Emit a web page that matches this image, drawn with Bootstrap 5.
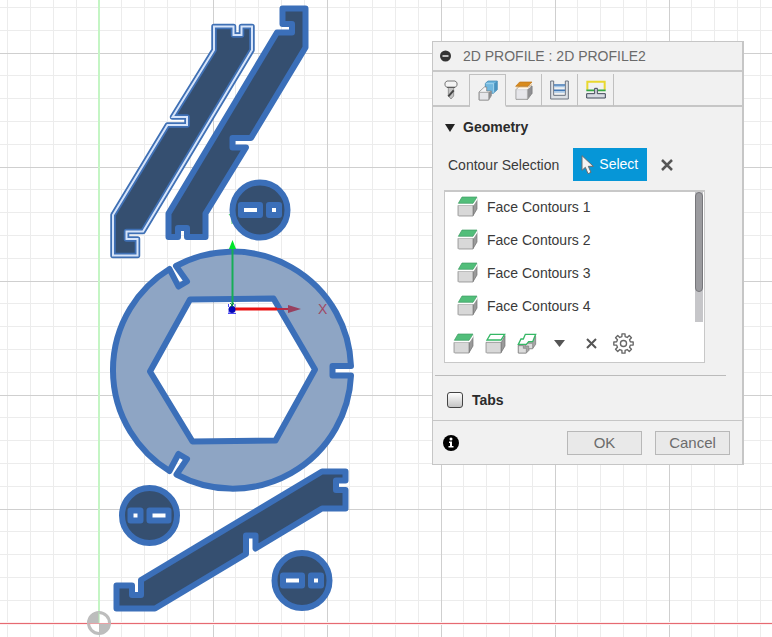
<!DOCTYPE html>
<html lang="en">
<head>
<meta charset="utf-8">
<meta name="viewport" content="width=device-width, initial-scale=1">
<title>2D Profile</title>
<link href="https://cdn.jsdelivr.net/npm/bootstrap@5.3.0/dist/css/bootstrap.min.css" rel="stylesheet">
<style>
body { font-family: "Liberation Sans", Arial, sans-serif; font-size: 14px; line-height: 20px; color: #3a3a3a; background: #fff; }
svg { display: block; flex: none; }
.workspace { min-height: 100vh; }
.sketch { inset: 0; }
.dialog-panel { top: 41px; right: 28px; width: 312px; background: #f1f1f1; border: 1px solid #c6c6c6; border-right-width: 2px; }
.panel-title { height: 30px; font-size: 14px; color: #6a6a6a; border-bottom: 2px solid #c8c8c8; padding: 0 7px; gap: 12px; }
.plain-btn { border: 0; background: none; padding: 0; color: #555; }
.tab-strip { height: 35px; padding-top: 2px; }
.tab-strip button { width: 36px; border: 0; border-right: 1px solid #c0c0c0; border-bottom: 2px solid #c6c6c6; background: none; padding: 0; }
.tab-strip button:first-child { width: 37px; }
.tab-strip button.active { border-top: 1px solid #c0c0c0; border-bottom-color: #f1f1f1; }
.tab-rest { border-bottom: 2px solid #c6c6c6; }
.section-head { height: 41px; padding-left: 12px; gap: 8px; font-size: 14px; font-weight: 700; color: #2b2b2b; }
.select-row { padding-left: 15px; gap: 14px; }
.select-btn { height: 33px; width: 74px; gap: 4px; padding: 0 8px; border: 0; border-radius: 0; font-size: 14px; color: #fff; background: #0696d7; }
.select-btn:hover { background: #0696d7; color: #fff; }
.contour-box { margin: 9px 37px 12px 11px; border: 1px solid #c8c8c8; border-top-width: 2px; background: #fff; }
.contour-list li { height: 29px; margin-bottom: 4px; padding-left: 12px; gap: 9px; }
.contour-list { height: 130px; overflow: hidden; }
.scroll-track { width: 8px; background: #c6c6c9; margin-right: 1px; }
.scroll-thumb { height: 100px; border: 1px solid #77777b; background: #9b9b9f; border-radius: 4px; }
.box-tools { height: 40px; padding: 2px 0 0 7px; gap: 10px; }
.box-tools button { width: 22px; display: flex; justify-content: center; }
.rule-line { margin: 0 16px 0 2px; border-top: 1px solid #bbb; }
.tabs-row { height: 44px; padding: 4px 0 0 14px; gap: 9px; }
.tabs-row label { font-size: 14px; color: #2b2b2b; }
.tick { appearance: none; width: 16px; height: 16px; margin: 0; border: 1px solid #444; border-radius: 3px; background: linear-gradient(#fff, #c4c4c4); }
.panel-foot { height: 44px; border-top: 1px solid #c6c6c6; padding: 0 12px 0 10px; gap: 13px; }
.foot-btn { width: 75px; height: 24px; border: 1px solid #b8b8b8; border-radius: 0; background: #e9e9e9; color: #6c6c6c; font-size: 15px; line-height: 20px; padding: 0; }
.cut { fill: #354f70; stroke: #3b6fb9; stroke-width: 6; stroke-linejoin: round; }
.cut-hole { fill: #fff; }
.axis-name { font: 14px "Liberation Sans", Arial, sans-serif; fill: #a04a66; }
</style>
<script src="https://cdn.jsdelivr.net/npm/bootstrap@5.3.0/dist/js/bootstrap.bundle.min.js"></script>
</head>
<body>
<svg width="0" height="0" class="position-absolute" aria-hidden="true">
  <defs>
    <symbol id="box-body" viewBox="0 0 63 63">
      <path d="M49 28 60 8V39L48 59z" fill="#9a9a9a" stroke="#6d6d6d" stroke-width="2"/>
      <path d="M3 28H48V60H5l-2-2z" fill="#d8d8d8" stroke="#777" stroke-width="2"/>
    </symbol>
    <symbol id="face-box" viewBox="0 0 63 63">
      <use href="#box-body"/>
      <path d="M3 26H49L61 7" fill="none" stroke="#fff" stroke-width="4"/>
      <path d="M15 3h45L48 22H4z" fill="#52be7a" stroke="#3c9a60" stroke-width="2"/>
    </symbol>
  </defs>
</svg>
<main class="workspace position-relative overflow-hidden">
  <svg class="sketch position-absolute w-100 h-100" role="img" aria-label="Sketch of the profile parts">
    <defs>
      <pattern id="grid" x="99" y="53" width="114" height="114" patternUnits="userSpaceOnUse">
        <path d="M22.500 0v114M45.500 0v114M68.500 0v114M91.500 0v114M0 22.500h114M0 45.500h114M0 68.500h114M0 91.500h114" stroke="#ececec"/>
        <path d="M.5 0v114M0 .5h114" stroke="#cfcfcf"/>
      </pattern>
      <g id="disc">
        <circle r="27.500" class="cut"/>
        <path class="cut cut-hole" d="M-19-5H0V5H-19zM9-5h10V5H9z"/>
      </g>
    </defs>
    <rect width="100%" height="100%" fill="url(#grid)"/>
    <rect x="98" y="0" width="2" height="623" fill="#c4f5c4"/>
    <rect x="0" y="622" width="100%" height="3" fill="#fdeeee"/>
    <rect x="0" y="623" width="100%" height="1" fill="#e66a72"/>
    <g>
      <circle cx="99" cy="623" r="10.500" fill="#fff" fill-opacity=".8" stroke="#bdbdbd" stroke-width="3"/>
      <path d="M99 623v-11a11 11 0 0 0-11 11zM99 623v11a11 11 0 0 0 11-11z" fill="#bdbdbd"/>
      <path d="M99 612v11" stroke="#b5e6b5"/>
      <path d="M88 623.500h22" stroke="#e8a0a4"/>
    </g>
    <path d="M229 214l3 4 1-4M232 218v6" fill="none" stroke="#4fd468"/>
    <path d="M214 26.500h19.500V35h8v-8.500H252V50L143 231.500h-16.500V239H137.500v16.500H113V215L167.500 125H187v-8h-14.500L214 50z" fill="#354f70" stroke="#3f70b5" stroke-width="5.500" stroke-linejoin="round"/>
    <path d="M214 26.500h19.500V35h8v-8.500H252V50L143 231.500h-16.500V239H137.500v16.500H113V215L167.500 125H187v-8h-14.500L214 50z" fill="none" stroke="#d6e4fa" stroke-width="2"/>
    <path class="cut" d="M282.500 8.500H305.500V47.500L251 138H232.500V147.500H246L205.500 213.500V237H187V228H178V237H168.500V213.500L277 32.500H292V24H282.500z"/>
    <use href="#disc" x="260" y="210"/>
    <use href="#disc" transform="translate(149.500 515.500) rotate(180)"/>
    <use href="#disc" x="302" y="580.500"/>
    <path class="cut" d="M322 471.500H345.500V480.500H336V490H345.500V508.500H322L255.500 548.500V535.500H246V554L155 608.500H116.500V585.500H132V595H141V580z"/>
    <path d="M176 266A118.500 118.500 0 0 1 351 366H332.500V375.500H351A118.500 118.500 0 0 1 176.500 474.500L187 459 178.500 454 169.500 471A118.500 118.500 0 0 1 169.500 269L178.500 286.500 187 281.500zM190 299.500 150 371.500 192.500 441.500 275.500 440.500 315 369.500 273.500 298.500z" fill="#8ea5c4" fill-rule="evenodd" stroke="#3b6fb9" stroke-width="6" stroke-linejoin="round"/>
    <path d="M232.500 305v-57" stroke="#17ad57" stroke-width="2"/>
    <path d="M232.500 240l3.500 9h-7z" fill="#00e52a"/>
    <path d="M234 309h43" stroke="#ea1111" stroke-width="3"/>
    <path d="M277 309h13" stroke="#b52b45" stroke-width="2"/>
    <path d="M288 305l13 4-13 4z" fill="#98405f"/>
    <text class="axis-name" x="318" y="314">X</text>
    <circle cx="232" cy="309.500" r="3.500" fill="#0505b8"/>
    <path d="M228.500 304v3M235 304v3M228 313.500h8M229 311v2" stroke="#4a4af0"/>
    <path d="M230 303l4 4M234 303l-4 4" stroke="#148c4c"/>
  </svg>

  <section class="dialog-panel position-absolute" aria-label="2D Profile settings">
    <header class="panel-title d-flex align-items-center">
      <button class="plain-btn" aria-label="Collapse"><svg width="11" height="12" viewBox="0 0 11 12"><circle cx="5.500" cy="6" r="5.500" fill="#333"/><path d="M2.500 6h6" stroke="#eee" stroke-width="1.500"/></svg></button>
      <span>2D PROFILE : 2D PROFILE2</span>
    </header>
    <nav class="tab-strip d-flex" role="tablist" aria-label="Settings pages">
      <button role="tab" aria-label="Tool" class="d-flex align-items-center justify-content-center"><svg width="14" height="20" viewBox="0 0 42 60"><path d="M13 22h16v26l-8 9-8-9z" fill="#c4c4c4" stroke="#777" stroke-width="2"/><path d="M13 49 29 31" stroke="#444" stroke-width="6"/><path d="M9 3h24l6 5v9l-6 5H9l-6-5V8z" fill="#f4f4f4" stroke="#777" stroke-width="3"/><path d="M9 22h24" stroke="#555" stroke-width="3"/></svg></button>
      <button role="tab" aria-label="Geometry" aria-selected="true" class="active d-flex align-items-center justify-content-center"><svg width="20" height="21" viewBox="0 0 60 63"><path d="M22 10 30 3H58V29L46 40H22z" fill="#72b8df" stroke="#2f7bab" stroke-width="2"/><path d="M48 11 57 4V28L48 37z" fill="#4a93c0"/><path d="M23 11H47V38" fill="none" stroke="#b9e2f5" stroke-width="2"/><path d="M3 36 19 21H26V33H40V47L32 60H3z" fill="#f4f4f6" stroke="#777" stroke-width="2"/><path d="M32 37 40 32V47L32 60z" fill="#8d8d90"/><path d="M4 37H32V60H4z" fill="#e6e6ea" stroke="#888" stroke-width="2"/></svg></button>
      <button role="tab" aria-label="Heights" class="d-flex align-items-center justify-content-center"><svg width="18" height="20" viewBox="0 0 54 60"><path d="M3 29 14 18H51V40L38 58H3z" fill="#fff" stroke="#777" stroke-width="2"/><path d="M37 29 51 18V40L37 58z" fill="#8f8f92" stroke="#666"/><path d="M4 29H37V57H4z" fill="#e6e6ea" stroke="#999"/><path d="M2 19 14 6H51L39 19z" fill="#d98b1d" stroke="#bd7415" stroke-width="2"/><path d="M4 23H40L51 12" fill="none" stroke="#f3c27c" stroke-width="2"/></svg></button>
      <button role="tab" aria-label="Passes" class="d-flex align-items-center justify-content-center"><svg width="19" height="20" viewBox="0 0 57 60"><path d="M2 3H11V46H46V3H55V57H2z" fill="#dde1e6" stroke="#6c7480" stroke-width="3"/><path d="M12 15H45M12 31H45" stroke="#4179b8" stroke-width="5"/><path d="M12 20H45M12 36H45" stroke="#a7c7e7" stroke-width="4"/></svg></button>
      <button role="tab" aria-label="Linking" class="d-flex align-items-center justify-content-center"><svg width="20" height="19" viewBox="0 0 60 57"><path d="M4 29V5H56V29" fill="none" stroke="#e9d82f" stroke-width="6"/><path d="M1 31H24M36 31H59" stroke="#36a843" stroke-width="5"/><path d="M2 41H26V25H34V41H58V54H2z" fill="#d7dbe3" stroke="#3f4858" stroke-width="3"/></svg></button>
      <div class="tab-rest flex-grow-1"></div>
    </nav>
    <h2 class="section-head d-flex align-items-center m-0">
      <svg width="10" height="8" viewBox="0 0 10 8"><path d="M0 0h10L5 8z" fill="#222"/></svg>
      Geometry
    </h2>
    <div class="select-row d-flex align-items-center">
      <span>Contour Selection</span>
      <button class="select-btn btn d-flex align-items-center"><svg width="14" height="20" viewBox="0 0 42 60"><path d="M3 2V46L13 37 21 56 30 52 22 34H37z" fill="#f4f4f4" stroke="#6d6d6d" stroke-width="3"/></svg>Select</button>
      <button class="plain-btn" aria-label="Clear selection"><svg width="12" height="12" viewBox="0 0 12 12"><path d="M1 1l10 10M11 1L1 11" stroke="#555" stroke-width="2.500"/></svg></button>
    </div>
    <div class="contour-box">
      <div class="d-flex">
        <ul class="contour-list list-unstyled flex-grow-1 m-0">
          <li class="d-flex align-items-center"><svg width="21" height="21"><use href="#face-box"/></svg>Face Contours 1</li>
          <li class="d-flex align-items-center"><svg width="21" height="21"><use href="#face-box"/></svg>Face Contours 2</li>
          <li class="d-flex align-items-center"><svg width="21" height="21"><use href="#face-box"/></svg>Face Contours 3</li>
          <li class="d-flex align-items-center"><svg width="21" height="21"><use href="#face-box"/></svg>Face Contours 4</li>
        </ul>
        <div class="scroll-track"><div class="scroll-thumb"></div></div>
      </div>
      <div class="box-tools d-flex align-items-center">
        <button class="plain-btn" aria-label="Face contours"><svg width="21" height="21"><use href="#face-box"/></svg></button>
        <button class="plain-btn" aria-label="Pocket contours"><svg width="21" height="21" viewBox="0 0 63 63"><use href="#box-body"/><path d="M16 4H59L48 21H6z" fill="#fff" stroke="#35b765" stroke-width="4"/></svg></button>
        <button class="plain-btn" aria-label="Silhouette"><svg width="20" height="21" viewBox="0 0 60 63"><path d="M4 36 25 34 56 10V34L47 47H36V52L28 60H4z" fill="#a5a5a5" stroke="#707070" stroke-width="2"/><path d="M4 38H19V46H28V60H4zM31 31H47V47H35V39H24z" fill="#dcdcdc" stroke="#808080" stroke-width="2"/><path d="M25 4H56L47 26H35L28 34H4L12 18H19z" fill="#fff" stroke="#35b765" stroke-width="4"/></svg></button>
        <button class="plain-btn" aria-label="More selection types"><svg width="11" height="7" viewBox="0 0 11 7"><path d="M0 0h11L5.500 7z" fill="#555"/></svg></button>
        <button class="plain-btn" aria-label="Remove"><svg width="11" height="11" viewBox="0 0 11 11"><path d="M1 1l9 9M10 1L1 10" stroke="#555" stroke-width="2"/></svg></button>
        <button class="plain-btn" aria-label="Settings"><svg width="21" height="21" viewBox="-31 -31 62 62" fill="none" stroke="#666" stroke-width="4"><circle r="9"/><path id="gear" stroke-linejoin="round"/></svg></button>
      </div>
    </div>
    <div class="rule-line"></div>
    <div class="tabs-row d-flex align-items-center">
      <input class="tick" type="checkbox" id="tabs-on">
      <label for="tabs-on" class="fw-bold">Tabs</label>
    </div>
    <footer class="panel-foot d-flex align-items-center">
      <button class="plain-btn me-auto" aria-label="Information"><svg width="16" height="16" viewBox="0 0 16 16"><circle cx="8" cy="8" r="8" fill="#000"/><circle cx="8" cy="4" r="1.500" fill="#fff"/><path d="M6 6.500h3V11h1.500v1.500h-5V11H7V8H6z" fill="#fff"/></svg></button>
      <button class="foot-btn btn">OK</button>
      <button class="foot-btn btn">Cancel</button>
    </footer>
  </section>
</main>
<script>
// Outline of the settings gear: eight teeth, four corners each.
const corners = [];
for (let tooth = 0; tooth < 8; tooth++) {
  [[-13, 21], [-9, 29], [9, 29], [13, 21]].forEach(([deg, radius]) => {
    const angle = (tooth * 45 + deg) * Math.PI / 180;
    corners.push((radius * Math.sin(angle)).toFixed(1) + ' ' + (-radius * Math.cos(angle)).toFixed(1));
  });
}
document.getElementById('gear').setAttribute('d', 'M' + corners.join('L') + 'z');
</script>
</body>
</html>
